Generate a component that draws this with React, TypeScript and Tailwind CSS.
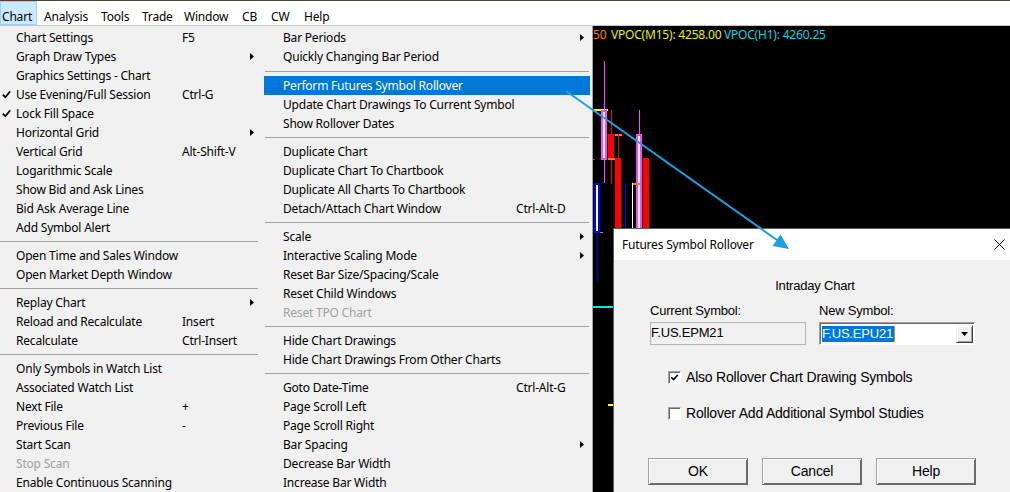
import React from "react";

type Item = {
  label?: string;
  shortcut?: string;
  arrow?: boolean;
  check?: boolean;
  disabled?: boolean;
  sep?: boolean;
  wide?: boolean;
  highlight?: boolean;
};

const leftItems: Item[] = [
  { label: "Chart Settings", shortcut: "F5" },
  { label: "Graph Draw Types", arrow: true },
  { label: "Graphics Settings - Chart" },
  { label: "Use Evening/Full Session", shortcut: "Ctrl-G", check: true },
  { label: "Lock Fill Space", check: true },
  { label: "Horizontal Grid", arrow: true },
  { label: "Vertical Grid", shortcut: "Alt-Shift-V" },
  { label: "Logarithmic Scale" },
  { label: "Show Bid and Ask Lines" },
  { label: "Bid Ask Average Line" },
  { label: "Add Symbol Alert" },
  { sep: true },
  { label: "Open Time and Sales Window" },
  { label: "Open Market Depth Window" },
  { sep: true },
  { label: "Replay Chart", arrow: true },
  { label: "Reload and Recalculate", shortcut: "Insert" },
  { label: "Recalculate", shortcut: "Ctrl-Insert" },
  { sep: true },
  { label: "Only Symbols in Watch List" },
  { label: "Associated Watch List" },
  { label: "Next File", shortcut: "+" },
  { label: "Previous File", shortcut: "-" },
  { label: "Start Scan" },
  { label: "Stop Scan", disabled: true },
  { label: "Enable Continuous Scanning" },
];

const midItems: Item[] = [
  { label: "Bar Periods", arrow: true },
  { label: "Quickly Changing Bar Period" },
  { sep: true, wide: true },
  { label: "Perform Futures Symbol Rollover", highlight: true },
  { label: "Update Chart Drawings To Current Symbol" },
  { label: "Show Rollover Dates" },
  { sep: true },
  { label: "Duplicate Chart" },
  { label: "Duplicate Chart To Chartbook" },
  { label: "Duplicate All Charts To Chartbook" },
  { label: "Detach/Attach Chart Window", shortcut: "Ctrl-Alt-D" },
  { sep: true },
  { label: "Scale", arrow: true },
  { label: "Interactive Scaling Mode", arrow: true },
  { label: "Reset Bar Size/Spacing/Scale" },
  { label: "Reset Child Windows" },
  { label: "Reset TPO Chart", disabled: true },
  { sep: true },
  { label: "Hide Chart Drawings" },
  { label: "Hide Chart Drawings From Other Charts" },
  { sep: true },
  { label: "Goto Date-Time", shortcut: "Ctrl-Alt-G" },
  { label: "Page Scroll Left" },
  { label: "Page Scroll Right" },
  { label: "Bar Spacing", arrow: true },
  { label: "Decrease Bar Width" },
  { label: "Increase Bar Width" },
];

function SubArrow({ white }: { white?: boolean }) {
  return (
    <svg width="4" height="7" viewBox="0 0 4 7">
      <polygon points="0,0 4,3.5 0,7" fill={white ? "#ffffff" : "#000000"} />
    </svg>
  );
}

function CheckMark() {
  return (
    <svg width="9" height="9" viewBox="0 0 9 9">
      <path d="M0.8 4.6 L3.3 7.2 L8.2 1.4" stroke="#000" strokeWidth="1.7" fill="none" />
    </svg>
  );
}

function LeftRow({ item }: { item: Item }) {
  if (item.sep) {
    return (
      <div className="h-[9px] flex items-center mr-[4px]">
        <div className="w-full h-px bg-[#a0a0a0]" />
      </div>
    );
  }
  return (
    <div className={"h-[19px] flex items-center mr-[4px] whitespace-nowrap " + (item.disabled ? "text-[#a0a0a0]" : "text-black")}>
      <span className="w-[16px] pl-[2px] flex items-center">{item.check && <CheckMark />}</span>
      <span className="w-[166px]">{item.label}</span>
      <span className="flex-1">{item.shortcut}</span>
      <span className="w-[8px] flex items-center">{item.arrow && <SubArrow />}</span>
    </div>
  );
}

function MidRow({ item }: { item: Item }) {
  if (item.sep) {
    return (
      <div className={(item.wide ? "h-[10px]" : "h-[9px]") + " flex items-center mx-[3px]"}>
        <div className="w-full h-px bg-[#a0a0a0]" />
      </div>
    );
  }
  const color = item.highlight
    ? "bg-[#0078d7] text-white"
    : item.disabled
    ? "text-[#a0a0a0]"
    : "text-black";
  return (
    <div className={"h-[19px] flex items-center mx-[2px] pl-[19px] whitespace-nowrap " + color}>
      <span className="w-[233px]">{item.label}</span>
      <span className="flex-1">{item.shortcut}</span>
      <span className="w-[10px] flex items-center">{item.arrow && <SubArrow white={item.highlight} />}</span>
    </div>
  );
}

const menuBar = [
  { label: "Chart", w: "w-[37px]" },
  { label: "Analysis", w: "w-[57px]" },
  { label: "Tools", w: "w-[41px]" },
  { label: "Trade", w: "w-[42px]" },
  { label: "Window", w: "w-[58px]" },
  { label: "CB", w: "w-[29px]" },
  { label: "CW", w: "w-[33px]" },
  { label: "Help", w: "w-[40px]" },
];

function Chart() {
  return (
    <div className="flex-1 bg-black relative overflow-hidden">
      <div className="pt-[1px] flex leading-[16px] whitespace-nowrap font-['Noto_Sans',sans-serif] text-[12px] tracking-[-0.2px]">
        <span className="text-[#ff8000] w-[18px]">50</span>
        <span className="text-[#ecec00] w-[113px]">VPOC(M15): 4258.00</span>
        <span className="text-[#14d0e6]">VPOC(H1): 4260.25</span>
      </div>
      {/* candles: free canvas */}
      <div className="absolute left-[1px] top-[83px] w-[14px] h-[2px] bg-[#ffff00]" />
      <div className="absolute left-[11px] top-[35px] w-px h-[122px] bg-[#ff44ff]" />
      <div className="absolute left-[8px] top-[84px] w-[6px] h-[50px] border-2 border-[#ff44ff] bg-white" />
      <div className="absolute left-[18px] top-[84px] w-px h-[74px] bg-[#ff0000]" />
      <div className="absolute left-[15px] top-[108px] w-[6px] h-[26px] bg-[#ff0000]" />
      <div className="absolute left-[15px] top-[132px] w-[7px] h-[2px] bg-[#ff8000]" />
      <div className="absolute left-[0px] top-[133px] w-[2px] h-px bg-[#a0522d]" />
      <div className="absolute left-[22px] top-[108px] w-[7px] h-[2px] bg-[#ff8000]" />
      <div className="absolute left-[25px] top-[108px] w-px h-[26px] bg-[#ff0000]" />
      <div className="absolute left-[22px] top-[132px] w-[6px] h-[80px] bg-[#ff0000]" />
      <div className="absolute left-[1px] top-[157px] w-[6px] h-[50px] border-2 border-[#0000ff] bg-white" />
      <div className="absolute left-[4px] top-[207px] w-px h-[48px] bg-[#0000ff]" />
      <div className="absolute left-[7px] top-[206px] w-[3px] h-px bg-[#ff8000]" />
      <div className="absolute left-[32px] top-[157px] w-px h-[50px] bg-[#0000ff]" />
      <div className="absolute left-[39px] top-[157px] w-px h-[50px] bg-white" />
      <div className="absolute left-[46px] top-[84px] w-px h-[24px] bg-[#ff44ff]" />
      <div className="absolute left-[43px] top-[108px] w-[6px] h-[100px] border-2 border-[#ff44ff] bg-white" />
      <div className="absolute left-[40px] top-[157px] w-[7px] h-[2px] bg-[#ff8000]" />
      <div className="absolute left-[50px] top-[132px] w-[6px] h-[80px] bg-[#ff0000]" />
      <div className="absolute left-[0px] top-[280px] w-[20px] h-[2px] bg-[#00e5e5]" />
      <div className="absolute left-[15px] top-[378px] w-[6px] h-[2px] bg-[#ffff00]" />
    </div>
  );
}

function RaisedButton({ label }: { label: string }) {
  return (
    <div className="w-[100px] h-[27px] bg-[#f0f0f0] border border-t-[#a0a0a0] border-l-[#a0a0a0] border-b-[#696969] border-r-[#696969] shadow-[inset_1px_1px_0_#ffffff,inset_-1px_-1px_0_#696969] flex items-center justify-center text-[14px] text-black">
      {label}
    </div>
  );
}

function CheckBox({ checked }: { checked?: boolean }) {
  return (
    <div className="w-[13px] h-[13px] bg-white border border-t-[#a0a0a0] border-l-[#a0a0a0] border-b-white border-r-white shadow-[inset_1px_1px_0_#696969] flex items-center justify-center">
      {checked && (
        <svg width="9" height="9" viewBox="0 0 9 9">
          <path d="M1.3 4.3 L3.5 6.6 L7.8 2" stroke="#000" strokeWidth="1.6" fill="none" />
        </svg>
      )}
    </div>
  );
}

function Dialog() {
  return (
    <div className="absolute left-[613px] top-[228px] w-[420px] h-[280px] bg-[#f0f0f0] border-l border-t border-[#5a5a5a] font-['Liberation_Sans',Arial,sans-serif] text-[13px] text-black">
      <div className="h-[31px] bg-white flex items-center pl-[8px]">
        <span className="font-['Noto_Sans',sans-serif] text-[12px] tracking-[-0.2px]">Futures Symbol Rollover</span>
        <span className="ml-auto mr-[28px] flex items-center">
          <svg width="11" height="11" viewBox="0 0 11 11">
            <path d="M0.5 0.5 L10.5 10.5 M10.5 0.5 L0.5 10.5" stroke="#000" strokeWidth="1" fill="none" />
          </svg>
        </span>
      </div>
      <div className="pt-[18px] pl-[36px]">
        <div className="w-[330px] text-center leading-[16px]">Intraday Chart</div>
        <div className="mt-[9px] flex gap-[13px]">
          <div className="w-[156px]">
            <div className="leading-[16px]">Current Symbol:</div>
            <div className="mt-[3px] h-[23px] border border-[#b4b4b4] bg-[#f0f0f0] pt-[2px] leading-[16px]">F.US.EPM21</div>
          </div>
          <div className="w-[156px]">
            <div className="leading-[16px]">New Symbol:</div>
            <div className="mt-[3px] h-[23px] border border-t-[#a0a0a0] border-l-[#a0a0a0] border-b-white border-r-white shadow-[inset_1px_1px_0_#696969] bg-white flex items-start pt-[2px] pl-[2px] pr-[1px]">
              <span className="mt-[1px] flex items-center h-[16px]">
                <span className="bg-[#0078d7] text-white leading-[16px] pr-px">F.US.EPU21</span>
                <span className="w-px h-[16px] bg-[#ff8000]" />
              </span>
              <span className="ml-auto w-[17px] h-[18px] bg-[#f0f0f0] border border-t-[#f0f0f0] border-l-[#f0f0f0] border-b-[#404040] border-r-[#404040] shadow-[inset_1px_1px_0_#ffffff,inset_-1px_-1px_0_#a0a0a0] flex items-center justify-center">
                <svg width="7" height="4" viewBox="0 0 7 4">
                  <polygon points="0,0 7,0 3.5,4" fill="#000" />
                </svg>
              </span>
            </div>
          </div>
        </div>
        <div className="mt-[24px] ml-[18px] flex items-center gap-[5px] h-[16px] text-[14px]">
          <CheckBox checked />
          <span>Also Rollover Chart Drawing Symbols</span>
        </div>
        <div className="mt-[20px] ml-[18px] flex items-center gap-[5px] h-[16px] text-[14px]">
          <CheckBox />
          <span>Rollover Add Additional Symbol Studies</span>
        </div>
        <div className="mt-[37px] -ml-[2px] flex gap-[14px]">
          <RaisedButton label="OK" />
          <RaisedButton label="Cancel" />
          <RaisedButton label="Help" />
        </div>
      </div>
    </div>
  );
}

export default function App() {
  return (
    <div className="w-[1010px] h-[492px] relative overflow-hidden bg-white font-['Noto_Sans',sans-serif] text-[12px] tracking-[-0.2px] text-black">
      <div className="h-px bg-[#4a4238]" />
      <div className="h-[25px] flex items-start border-b border-[#c8c8c8] bg-white leading-[16px]">
        {menuBar.map((m, i) =>
          i === 0 ? (
            <div key={m.label} className={m.w + " h-[24px] bg-[#cce8ff] border border-[#99d1ff] pl-[1px] pt-[7px]"}>
              {m.label}
            </div>
          ) : (
            <div key={m.label} className={m.w + " pl-[7px] pt-[8px] whitespace-nowrap"}>
              {m.label}
            </div>
          )
        )}
      </div>
      <div className="flex h-[466px]">
        <div className="w-[262px] bg-[#f0f0f0] pt-[2px]">
          {leftItems.map((it, i) => (
            <LeftRow key={i} item={it} />
          ))}
        </div>
        <div className="w-[331px] bg-[#f0f0f0] border-r border-[#a0a0a0] pt-[2px]">
          {midItems.map((it, i) => (
            <MidRow key={i} item={it} />
          ))}
        </div>
        <Chart />
      </div>
      <Dialog />
      <svg className="absolute left-0 top-0 pointer-events-none" width="1010" height="492" viewBox="0 0 1010 492">
        <line x1="566" y1="91" x2="777" y2="240" stroke="#1e9fe0" strokeWidth="2" />
        <polygon points="789,249 772.5,246 780.5,234.5" fill="#1e9fe0" />
      </svg>
    </div>
  );
}
